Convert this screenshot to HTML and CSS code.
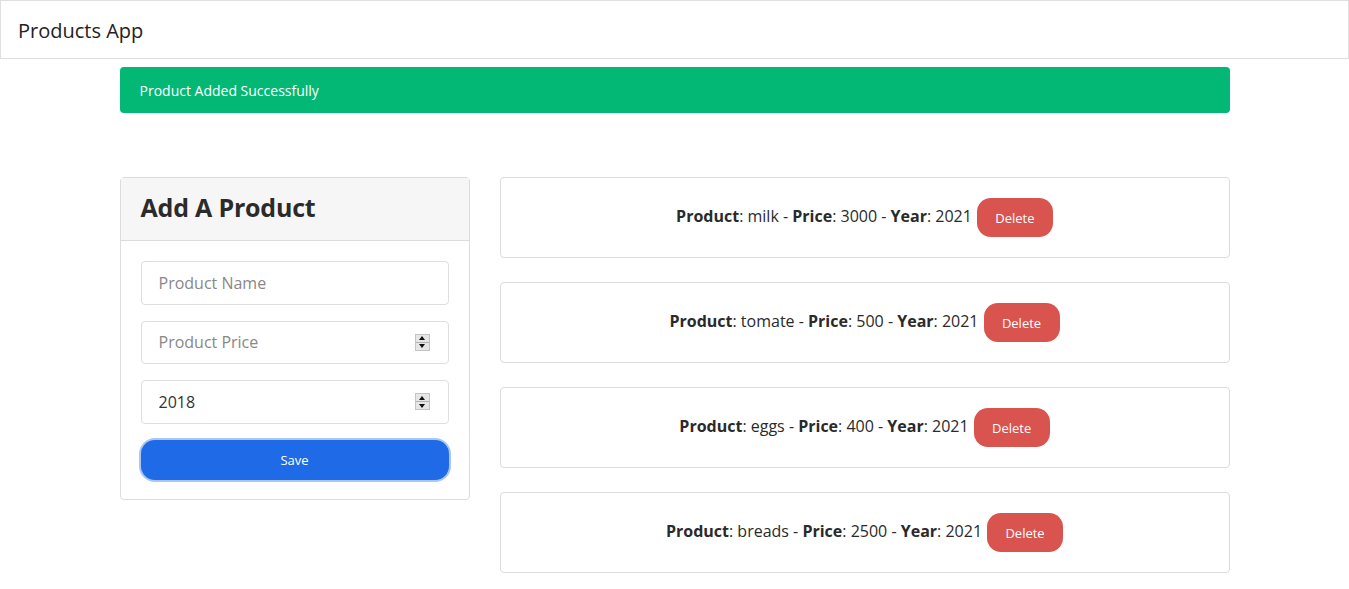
FILE: index.html
```html
<!DOCTYPE html>
<html>
<head>
<meta charset="utf-8">
<title>Products App</title>
<link rel="stylesheet" href="styles.css">
</head>
<body>
<nav class="navbar"><span class="brand">Products App</span></nav>
<div class="container">
  <div class="alert">Product Added Successfully</div>
  <div class="row">
    <div class="col-left">
      <div class="card">
        <div class="card-header"><h2>Add A Product</h2></div>
        <div class="card-body">
          <div class="field"><input class="input" type="text" placeholder="Product Name"></div>
          <div class="field"><input class="input" type="text" placeholder="Product Price"><span class="spin"><span class="up"></span><span class="down"></span></span></div>
          <div class="field"><input class="input" type="text" value="2018"><span class="spin"><span class="up"></span><span class="down"></span></span></div>
          <button class="btn-save">Save</button>
        </div>
      </div>
    </div>
    <div class="col-right">
      <div class="item"><span class="desc"><b>Product</b>: milk - <b>Price</b>: 3000 - <b>Year</b>: 2021</span><button class="btn-del">Delete</button></div>
      <div class="item"><span class="desc"><b>Product</b>: tomate - <b>Price</b>: 500 - <b>Year</b>: 2021</span><button class="btn-del">Delete</button></div>
      <div class="item"><span class="desc"><b>Product</b>: eggs - <b>Price</b>: 400 - <b>Year</b>: 2021</span><button class="btn-del">Delete</button></div>
      <div class="item"><span class="desc"><b>Product</b>: breads - <b>Price</b>: 2500 - <b>Year</b>: 2021</span><button class="btn-del">Delete</button></div>
    </div>
  </div>
</div>
</body>
</html>
```
FILE: styles.css
```css
* { box-sizing: border-box; }
body {
  margin: 0;
  font-family: "Open Sans", "Noto Sans", sans-serif;
  color: #212529;
  background: #fff;
}
.navbar {
  height: 59px;
  border: 1px solid #dfdfdf;
  display: flex;
  align-items: center;
  padding-left: 17px;
  padding-top: 2px;
}
.brand {
  font-size: 20px;
  color: #222;
}
.container {
  width: 1110px;
  margin: 8px auto 0;
}
.alert {
  background: #03b875;
  color: #fff;
  height: 46px;
  border-radius: 4px;
  font-size: 14px;
  display: flex;
  align-items: center;
  padding-left: 20px;
}
.row {
  display: flex;
  gap: 30px;
  margin-top: 64px;
  align-items: flex-start;
}
.col-left { width: 350px; flex: none; }
.col-right {
  flex: 1;
  display: flex;
  flex-direction: column;
  gap: 24px;
}
.card {
  border: 1px solid #dcdcdc;
  border-radius: 4px;
}
.card-header {
  background: #f6f6f6;
  height: 63px;
  border-bottom: 1px solid #dcdcdc;
  display: flex;
  align-items: center;
  padding-left: 20px;
  padding-bottom: 4px;
}
.card-header h2 {
  margin: 0;
  font-size: 25px;
  font-weight: 700;
  color: #2b2b2b;
  letter-spacing: -0.2px;
}
.card-body {
  padding: 20px 20px 19px;
  display: flex;
  flex-direction: column;
  gap: 16px;
}
.field { position: relative; }
.input {
  display: block;
  width: 100%;
  height: 43.67px;
  border: 1px solid #dedede;
  border-radius: 4px;
  padding: 0 17px;
  font-family: inherit;
  font-size: 16px;
  color: #333;
  outline: none;
}
.input::placeholder { color: #888; }
.spin {
  position: absolute;
  right: 19px;
  top: 13px;
  width: 15px;
  height: 17px;
  background: #e6e6e6;
  border: 1px solid #c4c4c4;
  display: flex;
  flex-direction: column;
}
.spin .up, .spin .down {
  flex: 1;
  position: relative;
}
.spin .up { border-bottom: 1px solid #b5b5b5; }
.spin .up::after, .spin .down::after {
  content: "";
  position: absolute;
  left: 50%;
  top: 50%;
  transform: translate(-50%, -50%);
  border-left: 3px solid transparent;
  border-right: 3px solid transparent;
}
.spin .up::after { border-bottom: 4px solid #111; }
.spin .down::after { border-top: 4px solid #111; }
.btn-save {
  height: 40px;
  background: #1f6ae6;
  color: #fff;
  border: none;
  border-radius: 14px;
  font-family: inherit;
  font-size: 13px;
  box-shadow: 0 0 0 2px #a9c6f5;
}
.item {
  height: 81px;
  border: 1px solid #dcdcdc;
  border-radius: 4px;
  display: flex;
  align-items: center;
  justify-content: center;
  gap: 5px;
  font-size: 16px;
  color: #2a2a2a;
}
.desc { margin-bottom: 3px; }
.item b { font-weight: 700; }
.btn-del {
  width: 76px;
  height: 39px;
  background: #d9534f;
  color: #fff;
  border: none;
  border-radius: 14px;
  font-family: inherit;
  font-size: 13px;
}
```
